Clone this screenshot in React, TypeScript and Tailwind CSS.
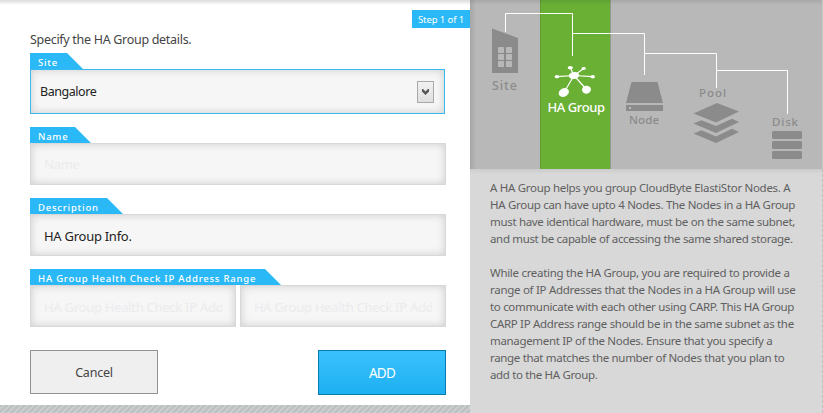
import type { ReactNode } from 'react';

const inputClass =
  'h-[42px] min-w-0 border border-[#d8d8d8] bg-[#f6f6f6] px-[13px] font-[inherit] text-[13px] tracking-[-0.27px] text-[#222] shadow-[inset_0_0_9px_rgba(0,0,0,0.17)] outline-none placeholder:text-[#ebebed]';

function Tab({ children, width }: { children: ReactNode; width: string }) {
  return (
    <div
      className={`h-4 bg-[#2bb8f6] pl-2 text-[9.5px] leading-[19px] font-medium tracking-[0.78px] whitespace-nowrap text-white [clip-path:polygon(0_0,calc(100%-16px)_0,100%_100%,0_100%)] ${width}`}
    >
      {children}
    </div>
  );
}

function Diagram() {
  return (
    <svg width="353" height="169" viewBox="0 0 353 169" className="block">
      <defs>
        <linearGradient id="top" x1="0" y1="0" x2="0" y2="1">
          <stop offset="0" stopColor="#000" stopOpacity=".09" />
          <stop offset="1" stopColor="#000" stopOpacity="0" />
        </linearGradient>
        <linearGradient id="side" x1="0" y1="0" x2="1" y2="0">
          <stop offset="0" stopColor="#000" stopOpacity=".1" />
          <stop offset="1" stopColor="#000" stopOpacity="0" />
        </linearGradient>
      </defs>
      <rect width="353" height="169" fill="#b8b8b8" />
      <rect x="70" width="70" height="169" fill="#69b035" />
      <rect x="70" width="1" height="169" fill="#5e9e30" />
      <rect x="140" width="1" height="169" fill="#909d8a" />
      <rect width="353" height="5" fill="url(#top)" />
      <rect width="6" height="169" fill="url(#side)" />
      <rect x="352" width="1" height="169" fill="#c9c9c9" />
      <g fill="none" stroke="#fff">
        <path d="M35.500 32V13.500H102.500V56" />
        <path d="M102.500 33.500H174.500V75" />
        <path d="M174.500 53.500H246.500V88" />
        <path d="M246.500 70.500H317.500V114" />
      </g>
      <path d="M22 28.500 48 38V73H22Z" fill="#8b8b8b" />
      <g fill="#b8b8b8">
        <rect x="28" y="47" width="6" height="6" rx=".7" />
        <rect x="36" y="47" width="6" height="6" rx=".7" />
        <rect x="28" y="54" width="6" height="6" rx=".7" />
        <rect x="36" y="54" width="6" height="6" rx=".7" />
        <rect x="28" y="61" width="6" height="6" rx=".7" />
        <rect x="36" y="61" width="6" height="6" rx=".7" />
      </g>
      <g stroke="#fff" strokeWidth="1.200" fill="#fff">
        <path d="M104 75.500 87 76.700M104 75.500 122.500 76.700M104 75.500 100.300 67.700M104 75.500 113.700 68.500M104 75.500 94 92.500M104 75.500 116.500 89.500" />
        <g stroke="none">
          <ellipse cx="104" cy="75.500" rx="5.200" ry="3.500" transform="rotate(-8 104 75.500)" />
          <ellipse cx="100.300" cy="67.700" rx="2.600" ry="1.700" />
          <ellipse cx="113.700" cy="68.500" rx="2.100" ry="1.400" />
          <ellipse cx="87" cy="76.700" rx="2.300" ry="1.600" />
          <ellipse cx="122.700" cy="76.700" rx="2.300" ry="1.700" />
          <ellipse cx="93.800" cy="92.500" rx="5.300" ry="4.200" transform="rotate(-25 93.800 92.500)" />
          <ellipse cx="116.500" cy="89.700" rx="4.500" ry="4" transform="rotate(-15 116.500 89.700)" />
        </g>
      </g>
      <path d="M161.500 82H187.500L193 103H156Z" fill="#8b8b8b" />
      <path d="M156 105H193V111H156Z" fill="#8b8b8b" />
      <rect x="159" y="107" width="2" height="2" fill="#b8b8b8" />
      <g fill="#8b8b8b">
        <path d="M247 103 269 111.500 246 122.500 223.500 113.500Z" />
        <path d="M223.500 123.500 231.500 120.300 246 126 262 118.700 269 122 246 133Z" />
        <path d="M223.500 133.500 231.500 130.300 246 136.500 262 128.700 269 132 246 143Z" />
        <rect x="302" y="131" width="30" height="8" rx="1.500" />
        <rect x="302" y="141" width="30" height="8" rx="1.500" />
        <rect x="302" y="151" width="30" height="8" rx="1.500" />
      </g>
      <g fill="#8b8b8b" fontSize="11.500" fontWeight="500">
        <text x="22" y="90" fontSize="12.500" textLength="25">Site</text>
        <text x="159" y="124" textLength="30">Node</text>
        <text x="229" y="97" textLength="27">Pool</text>
        <text x="302" y="126" textLength="26">Disk</text>
      </g>
      <text x="77.500" y="112" fill="#fff" fontSize="13" fontWeight="500" textLength="57.500">HA Group</text>
    </svg>
  );
}

const first: [string, string][] = [
  ['A HA Group helps you group CloudByte ElastiStor Nodes. A', 'tracking-[-0.3px]'],
  ['HA Group can have upto 4 Nodes. The Nodes in a HA Group', 'tracking-[-0.3px]'],
  ['must have identical hardware, must be on the same subnet,', 'tracking-[-0.32px]'],
  ['and must be capable of accessing the same shared storage.', 'tracking-[-0.34px]'],
];
const second: [string, string][] = [
  ['While creating the HA Group, you are required to provide a', 'tracking-[-0.3px]'],
  ['range of IP Addresses that the Nodes in a HA Group will use', 'tracking-[-0.29px]'],
  ['to communicate with each other using CARP. This HA Group', 'tracking-[-0.32px]'],
  ['CARP IP Address range should be in the same subnet as the', 'tracking-[-0.32px]'],
  ['management IP of the Nodes. Ensure that you specify a', 'tracking-[-0.33px]'],
  ['range that matches the number of Nodes that you plan to', 'tracking-[-0.33px]'],
  ['add to the HA Group.', 'tracking-[-0.35px]'],
];

function Paragraph({ lines }: { lines: [string, string][] }) {
  return (
    <p>
      {lines.map(([text, tracking]) => (
        <span key={text} className={`block whitespace-nowrap ${tracking}`}>
          {text}
        </span>
      ))}
    </p>
  );
}

export default function App() {
  return (
    <div className="flex h-[413px] w-[823px] overflow-hidden bg-white font-['Noto_Sans',sans-serif]">
      <main className="flex w-[470px] flex-col bg-[linear-gradient(to_bottom,#dcdcdc,#fff_5px)]">
        <div className="mt-2.5 h-[18px] w-[58px] self-end bg-[#2bb8f6] pl-1.5 text-[9.5px] leading-[19px] tracking-[-0.1px] whitespace-nowrap text-white">
          Step 1 of 1
        </div>
        <form className="ml-[30px] flex w-[416px] flex-col">
          <p className="h-[25px] text-[12.5px] leading-6 tracking-[-0.3px] text-[#444]">Specify the HA Group details.</p>
          <Tab width="w-[53px]">Site</Tab>
          <div className="flex h-[45px] w-[415px] items-center justify-between border border-[#36baf2] bg-[#f6f6f6] pr-[10px] pl-[9px] text-[12.5px] text-[#222] shadow-[inset_0_0_9px_rgba(0,0,0,0.17)]">
            <span className="pt-0.5 tracking-[-0.45px]">Bangalore</span>
            <span className="flex h-[22px] w-[17px] items-center justify-center border border-[#a9a9a9] bg-linear-to-b from-[#f1f1f1] to-[#dfdfdf]">
              <svg width="7" height="6" viewBox="0 0 7 6">
                <path d="M0 0H1L3.500 2.500 6 0H7V2.500L3.500 6 0 2.500Z" fill="#555" />
              </svg>
            </span>
          </div>
          <div className="mt-[13px]">
            <Tab width="w-[61px]">Name</Tab>
            <input className={`${inputClass} block w-full`} placeholder="Name" />
          </div>
          <div className="mt-[13px]">
            <Tab width="w-[93px]">Description</Tab>
            <input className={`${inputClass} block w-full pt-0.5`} defaultValue="HA Group Info." />
          </div>
          <div className="mt-[13px]">
            <Tab width="w-[251px]">HA Group Health Check IP Address Range</Tab>
            <div className="flex gap-1">
              <input className={`${inputClass} flex-1 pt-0.5`} placeholder="HA Group Health Check IP Address" />
              <input className={`${inputClass} flex-1 pt-0.5`} placeholder="HA Group Health Check IP Address" />
            </div>
          </div>
          <div className="mt-[23px] flex items-start justify-between">
            <button type="button" className="h-11 w-32 border border-[#929292] bg-[#efefef] pt-0.5 text-[12.5px] tracking-[-0.2px] text-[#444]">
              Cancel
            </button>
            <button type="button" className="h-[45px] w-32 border border-[#087bae] bg-linear-to-b from-[#39c1fc] to-[#1cb0f2] pt-0.5 text-[13.5px] tracking-[-0.7px] text-white">
              ADD
            </button>
          </div>
        </form>
        <div className="mt-auto h-2 bg-[repeating-linear-gradient(135deg,#bcc0c1_0_2px,#c9cdce_2px_4.24px)]" />
      </main>
      <aside className="flex w-[353px] flex-col bg-[#d8d8d8]">
        <Diagram />
        <div className="flex flex-1 flex-col gap-[17px] border-r border-dashed border-[#c0c0c0] bg-[linear-gradient(to_bottom,#cbcbcb,#d8d8d8_5px)] pt-[10px] pl-5 text-[11.5px] leading-[17px] text-[#606060]">
          <Paragraph lines={first} />
          <Paragraph lines={second} />
        </div>
      </aside>
    </div>
  );
}
